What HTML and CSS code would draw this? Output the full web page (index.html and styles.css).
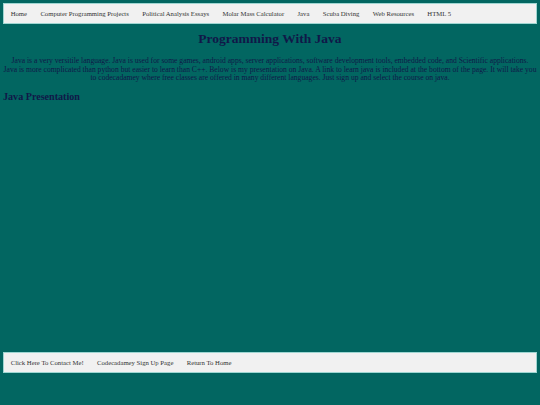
FILE: index.html
```html
<!DOCTYPE html>
<html>
<head>
<meta charset="utf-8">
<title>Programming With Java</title>
<link rel="stylesheet" href="styles.css">
</head>
<body>
<ul class="nav">
  <li><a href="#">Home</a></li>
  <li><a href="#">Computer Programming Projects</a></li>
  <li><a href="#">Political Analysis Essays</a></li>
  <li><a href="#">Molar Mass Calculator</a></li>
  <li><a href="#">Java</a></li>
  <li><a href="#">Scuba Diving</a></li>
  <li><a href="#">Web Resources</a></li>
  <li><a href="#">HTML 5</a></li>
</ul>
<h1 class="title">Programming With Java</h1>
<p class="intro">Java is a very versitile language. Java is used for some games, android apps, server applications, software development tools, embedded code, and Scientific applications.<br>Java is more complicated than python but easier to learn than C++. Below is my presentation on Java. A link to learn java is included at the bottom of the page. It will take you to codecadamey where free classes are offered in many different languages. Just sign up and select the course on java.</p>
<h2 class="sub">Java Presentation</h2>
<div class="presentation"></div>
<ul class="nav">
  <li><a href="#">Click Here To Contact Me!</a></li>
  <li><a href="#">Codecadamey Sign Up Page</a></li>
  <li><a href="#">Return To Home</a></li>
</ul>
</body>
</html>
```
FILE: styles.css
```css
html, body {
  background: #026661;
}
body {
  margin: 3px;
  font-family: "Liberation Serif", "Times New Roman", serif;
  color: #101848;
}
.nav {
  list-style: none;
  margin: 0;
  padding: 0;
  display: flex;
  background: #f1f1f1;
  border: 1px solid #9fd6d2;
}
.nav li a {
  display: block;
  padding: 5.9px 6.7px;
  font-size: 6.7px;
  line-height: 7.7px;
  color: #333333;
  text-decoration: none;
}
.title {
  text-align: center;
  font-size: 13.5px;
  line-height: 15.5px;
  margin: 7px 0 10px;
}
.intro {
  text-align: center;
  font-size: 7.62px;
  line-height: 8.7px;
  margin: 7.6px 0;
}
.sub {
  font-size: 10.1px;
  line-height: 11.6px;
  margin: 6.5px 0 8.4px;
}
.presentation {
  height: 241px;
}
```
